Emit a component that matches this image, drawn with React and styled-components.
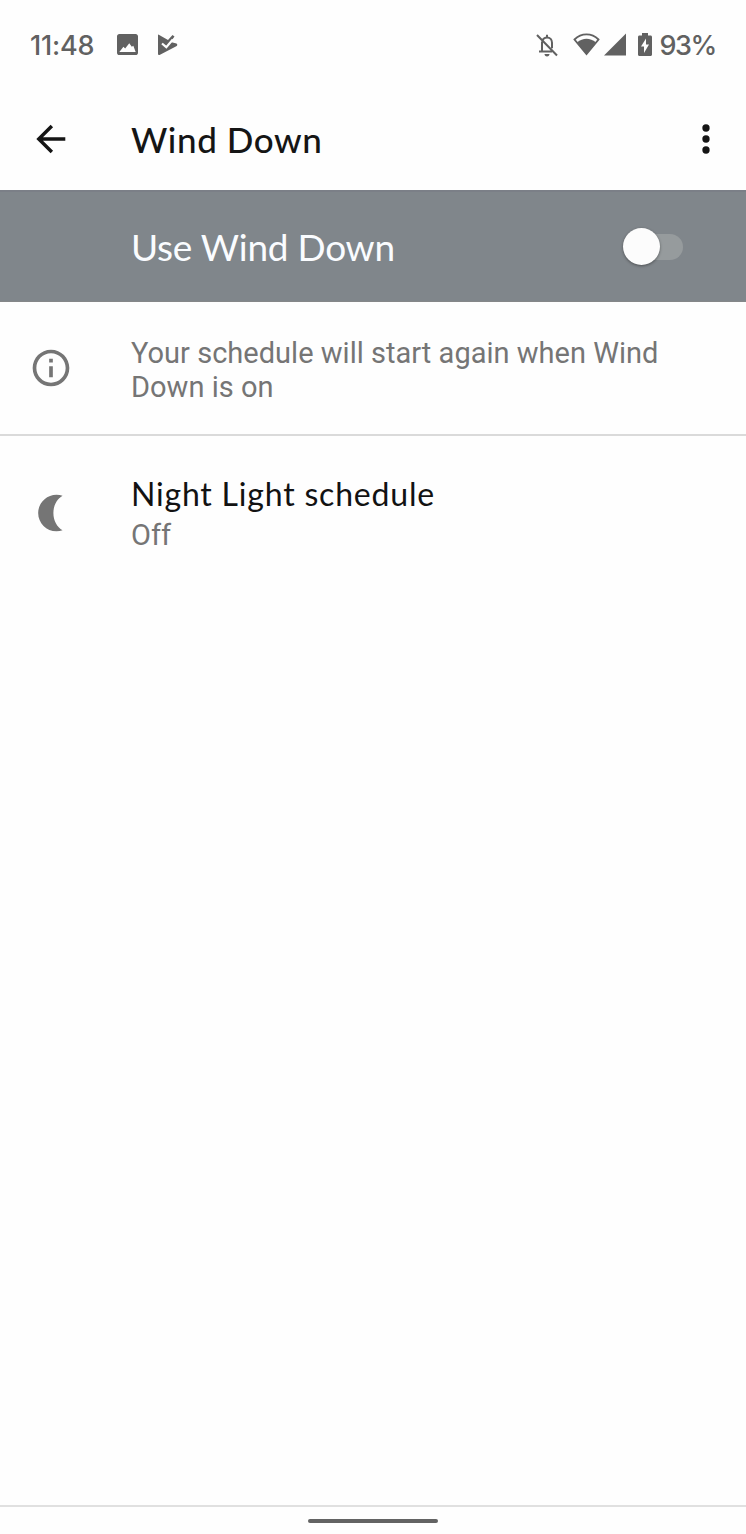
import React, { useState } from "react";
import styled, { createGlobalStyle } from "styled-components";

const GlobalStyle = createGlobalStyle`
  body {
    margin: 0;
    background-color: #fefefe;
  }
  * {
    box-sizing: border-box;
  }
`;

const Screen = styled.div`
  height: 1534px;
  display: flex;
  flex-direction: column;
  background-color: #fefefe;
  font-family: Lato, "Noto Sans", sans-serif;
`;

const StatusBar = styled.div`
  height: 89px;
  padding: 0 30px;
  display: flex;
  align-items: center;
  justify-content: space-between;
  color: #616161;
`;
const StatusGroup = styled.div`
  display: flex;
  align-items: center;
`;
const StatusText = styled.span`
  padding-top: 2px;
  margin-left: ${(props) => props.$gap || 0}px;
  font-family: Inter, sans-serif;
  font-size: 27px;
  font-weight: 450;
  line-height: 32px;
  letter-spacing: ${(props) => props.$spacing || 0}px;
  white-space: nowrap;
`;
const StatusIcon = styled.svg`
  display: block;
  flex-shrink: 0;
  width: ${(props) => props.$w}px;
  height: ${(props) => props.$h}px;
  margin-left: ${(props) => props.$gap || 0}px;
  fill: currentColor;
`;

const Icon = styled.svg`
  display: block;
  flex-shrink: 0;
  width: 44px;
  height: 44px;
  fill: ${(props) => props.$color || "#757575"};
`;

const Toolbar = styled.header`
  height: 101px;
  padding: 0 18px 1px 29px;
  display: flex;
  align-items: center;
`;
const Title = styled.h1`
  flex: 1;
  margin: 0 0 0 58px;
  padding-bottom: 1px;
  color: #151515;
  font-size: 35px;
  font-weight: 500;
  line-height: 42px;
  letter-spacing: 0.6px;
`;

const Banner = styled.div`
  height: 112px;
  padding: 0 63px 0 131px;
  display: flex;
  align-items: center;
  justify-content: space-between;
  background-color: #80868b;
  border-top: 2px solid #7b7f87;
  border-bottom: 1px solid #858789;
`;
const BannerLabel = styled.span`
  color: #fafcff;
  font-size: 37px;
  line-height: 44px;
  letter-spacing: -0.25px;
`;
const Switch = styled.button`
  width: 60px;
  height: 38px;
  padding: 0;
  border: 0;
  background: none;
  display: flex;
  align-items: center;
`;
const Track = styled.span`
  width: 52px;
  height: 26px;
  margin-left: 8px;
  display: flex;
  align-items: center;
  border-radius: 13px;
  background-color: #969b9d;
`;
const Thumb = styled.span`
  width: 37px;
  height: 37px;
  flex-shrink: 0;
  margin-left: ${(props) => (props.$on ? "15px" : "-8px")};
  border-radius: 50%;
  background-color: #fcfcfc;
  box-shadow: 0 1px 3px rgba(0, 0, 0, 0.4);
`;

const Row = styled.div`
  height: ${(props) => props.$height}px;
  padding-left: 29px;
  display: flex;
  align-items: center;
  border-bottom: ${(props) => (props.$divider ? "2px solid #dadada" : "0")};
`;
const RowText = styled.div`
  margin-left: 58px;
  padding-top: ${(props) => props.$offset || 0}px;
`;
const RowTitle = styled.div`
  color: #121212;
  font-size: 32px;
  line-height: 40px;
  letter-spacing: 0.8px;
  margin-bottom: 4px;
`;
const RowSummary = styled.div`
  color: #757575;
  font-family: Roboto, sans-serif;
  font-size: 29px;
  line-height: 34px;
  letter-spacing: 0.02px;
`;

const Content = styled.main`
  flex: 1;
`;
const NavBar = styled.footer`
  height: 29px;
  display: flex;
  justify-content: center;
  padding-top: 12px;
  border-top: 2px solid #e0e0e0;
`;
const HomeHandle = styled.div`
  width: 130px;
  height: 4px;
  border-radius: 2px;
  background-color: #636363;
`;

const App = () => {
  const [on, setOn] = useState(false);

  return (
    <Screen>
      <GlobalStyle />
      <StatusBar>
        <StatusGroup>
          <StatusText $spacing={-0.2}>11:48</StatusText>
          <StatusIcon $w={21} $h={21} $gap={23} viewBox="3 3 18 18">
            <path d="M21 19V5c0-1.100-.9-2-2-2H5c-1.100 0-2 .9-2 2v14c0 1.100.9 2 2 2h14c1.100 0 2-.9 2-2zM5 18.500l3.500-4.500 1.500 1.500 3.500-4.500 2.200 3 1.300-1 2 5.500z" />
          </StatusIcon>
          <StatusIcon $w={21} $h={22} $gap={19} viewBox="0 0 21 22">
            <path d="M1.800.7L11 6l4.500-5 2 1.500-4 5.500 6 1.400c1.200.8 1 2.200-.2 2.900L3 20.800c-1 .6-2 0-2-1.100V1.300C1 .7 1.400.4 1.800.7z" />
            <path
              d="M5 9.500l4.300 3.700 6.500-7.700"
              fill="none"
              stroke="#fefefe"
              strokeWidth="2.200"
            />
          </StatusIcon>
        </StatusGroup>
        <StatusGroup>
          <StatusIcon $w={24} $h={24} viewBox="0 0 24 24">
            <path
              d="M2 2l20 20.500M7 8.500v9.500M4 18.500h13M7.500 7.500C8.300 5.500 10 4.400 12 4.400c3 0 5 2.400 5 5.400v5.400M12 4V1.800"
              fill="none"
              stroke="currentColor"
              strokeWidth="2"
            />
            <path d="M9.500 21h5c0 1.500-1 2.500-2.500 2.500S9.500 22.500 9.500 21z" />
          </StatusIcon>
          <StatusIcon $w={27} $h={23} $gap={14} viewBox="0 0 27 23">
            <path
              d="M1.500 6.500C8.300-.3 18.700-.3 25.500 6.500L13.500 21z"
              fill="none"
              stroke="currentColor"
              strokeWidth="1.800"
            />
            <path d="M4.200 9.300C9.600 4.500 17.400 4.500 22.800 9.300L13.500 21.500z" />
          </StatusIcon>
          <StatusIcon $w={22} $h={23} $gap={4} viewBox="0 0 23 23">
            <path d="M0 23L23 0v23z" />
          </StatusIcon>
          <StatusIcon $w={14} $h={23} $gap={12} viewBox="0 0 14 23">
            <path
              fillRule="evenodd"
              d="M4 0h6v2.500h2.500c.9 0 1.500.6 1.500 1.500v17.500c0 .9-.6 1.500-1.500 1.500h-11C.6 23 0 22.400 0 21.500V4c0-.9.6-1.500 1.500-1.500H4zM8 5.500L3 13.500h3V20l5-8.500H8z"
            />
          </StatusIcon>
          <StatusText $gap={7} $spacing={-1.4}>93%</StatusText>
        </StatusGroup>
      </StatusBar>

      <Toolbar>
        <Icon viewBox="0 0 24 24" $color="#151515">
          <path d="M19.800 11.100H7.630l5.500-5.500L11.800 4.200 4 12l7.800 7.800 1.330-1.400-5.500-5.500H19.800z" />
        </Icon>
        <Title>Wind Down</Title>
        <Icon viewBox="0 0 24 24" $color="#151515">
          <circle cx="12" cy="6" r="2" />
          <circle cx="12" cy="12" r="2" />
          <circle cx="12" cy="18" r="2" />
        </Icon>
      </Toolbar>

      <Banner>
        <BannerLabel>Use Wind Down</BannerLabel>
        <Switch onClick={() => setOn(!on)}>
          <Track>
            <Thumb $on={on} />
          </Track>
        </Switch>
      </Banner>

      <Content>
        <Row $height={134} $divider>
          <Icon viewBox="0 0 24 24">
            <path d="M11 7h2v2h-2zm0 4h2v6h-2zm1-9C6.480 2 2 6.480 2 12s4.480 10 10 10 10-4.480 10-10S17.520 2 12 2zm0 18c-4.410 0-8-3.590-8-8s3.590-8 8-8 8 3.590 8 8-3.590 8-8 8z" />
          </Icon>
          <RowText $offset={3}>
            <RowSummary>
              Your schedule will start again when Wind
              <br />
              Down is on
            </RowSummary>
          </RowText>
        </Row>
        <Row $height={154}>
          <Icon viewBox="0 0 24 24">
            <path d="M15 2c1.200 0 2.300.2 3.300.6-3 1.700-5 5.200-5 9.400s2 7.700 5 9.400c-1 .4-2.100.6-3.300.6-5.500 0-10-4.500-10-10S9.500 2 15 2z" />
          </Icon>
          <RowText>
            <RowTitle>Night Light schedule</RowTitle>
            <RowSummary>Off</RowSummary>
          </RowText>
        </Row>
      </Content>

      <NavBar>
        <HomeHandle />
      </NavBar>
    </Screen>
  );
};

export default App;
